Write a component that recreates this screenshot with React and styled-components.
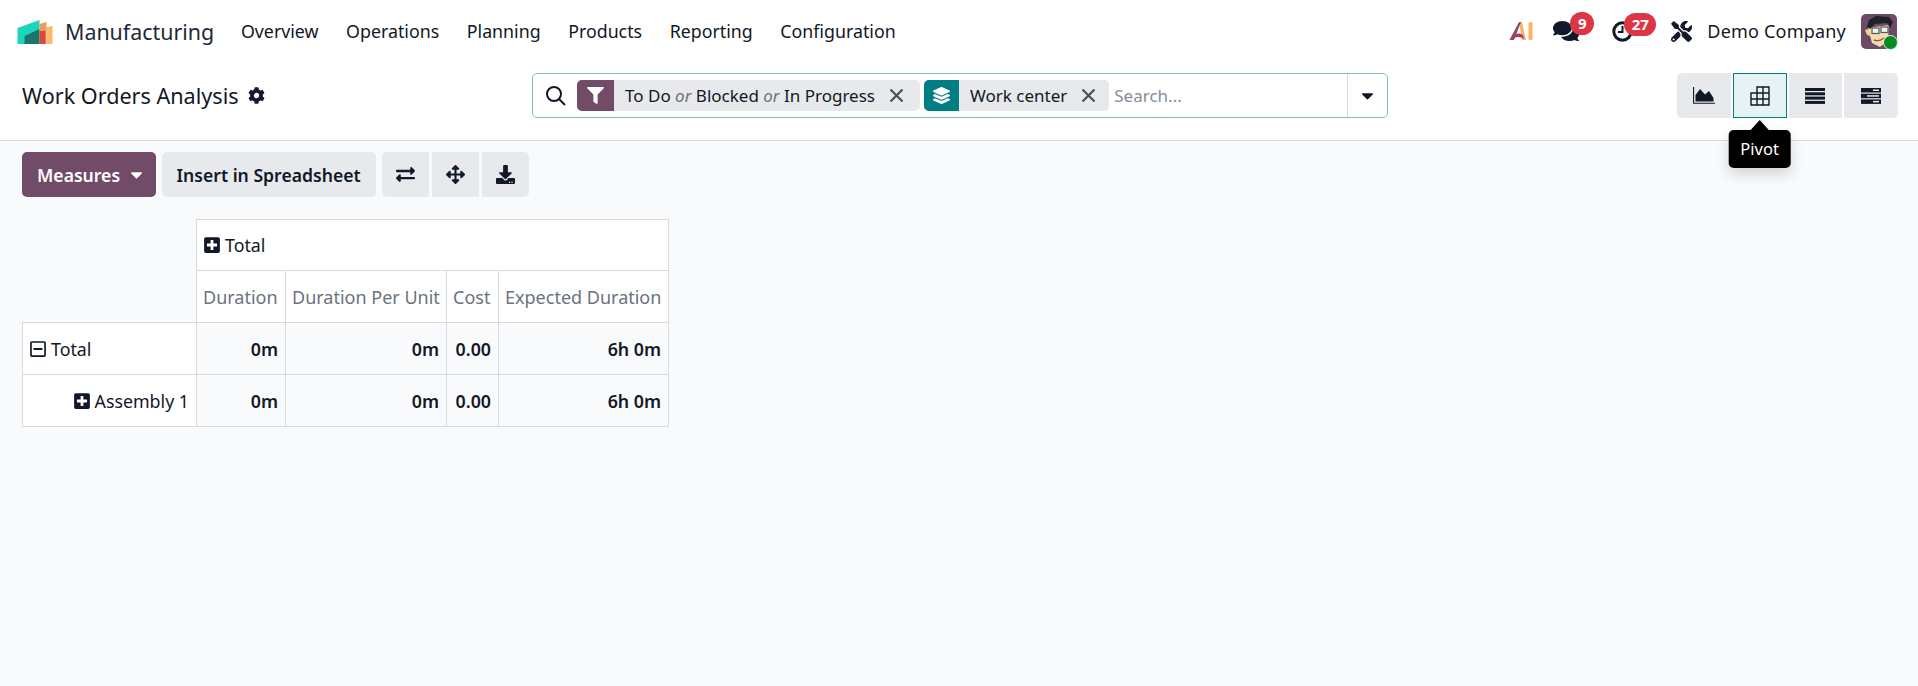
import React from 'react';
import styled, { createGlobalStyle } from 'styled-components';
import {
  FaArrowsAlt,
  FaCaretDown,
  FaCog,
  FaComments,
  FaDownload,
  FaExchangeAlt,
  FaFilter,
  FaLayerGroup,
  FaPlusSquare,
  FaRegMinusSquare,
  FaTools,
} from 'react-icons/fa';

const GlobalStyle = createGlobalStyle`
  html, body {
    margin: 0;
    padding: 0;
    height: 100%;
    background: #f9fafb;
    font-family: "Noto Sans", "Liberation Sans", sans-serif;
    font-size: 18px;
    color: #111827;
  }
  #root { height: 100%; }
`;

const Page = styled.div`
  display: flex;
  flex-direction: column;
  height: 686px;
  overflow: hidden;
`;

const Navbar = styled.div`
  display: flex;
  align-items: center;
  height: 62px;
  padding: 0 21px 0 17px;
  background: #fff;
`;

const Brand = styled.div`
  display: flex;
  align-items: center;
  gap: 12px;
  font-size: 21.4px;
  color: #1f2937;
  margin-right: 13px;
`;

const NavLink = styled.div`
  padding: 0 13.8px;
  font-size: 17.8px;
  color: #111827;
`;

const NavRight = styled.div`
  display: flex;
  align-items: center;
  margin-left: auto;
`;

const IconSlot = styled.div`
  position: relative;
  display: flex;
  align-items: center;
  font-size: ${p => p.$size || 20}px;
  color: #111827;
  margin-right: ${p => p.$gap || 0}px;
`;

const Badge = styled.span`
  position: absolute;
  top: ${p => p.$top}px;
  left: ${p => p.$left}px;
  min-width: ${p => p.$width}px;
  height: 23px;
  border-radius: 12px;
  background: #dc3545;
  color: #fff;
  font-size: 15px;
  font-weight: 700;
  line-height: 23px;
  text-align: center;
`;

const CompanyName = styled.div`
  font-size: 18px;
  letter-spacing: 0.2px;
  margin-right: 15px;
`;

const Avatar = styled.div`
  position: relative;
  width: 36px;
  height: 35px;
`;

const OnlineDot = styled.span`
  position: absolute;
  right: -1px;
  bottom: -1px;
  width: 13px;
  height: 13px;
  border-radius: 50%;
  background: #078a1e;
  border: 1px solid #eaf2f4;
`;

const ControlPanel = styled.div`
  display: flex;
  align-items: center;
  height: 79px;
  box-sizing: border-box;
  padding: 11px 20px 22px 22px;
  background: #fff;
  border-bottom: 1px solid #d8dadd;
`;

const TitleBlock = styled.div`
  display: flex;
  align-items: center;
  gap: 9px;
  width: 510px;
  font-size: 21.6px;
  color: #111827;
  svg { font-size: 17px; }
`;

const SearchBox = styled.div`
  display: flex;
  align-items: center;
  width: 856px;
  height: 45px;
  box-sizing: border-box;
  padding-left: 12px;
  background: #fff;
  border: 1px solid #7fbdc0;
  border-radius: 5px;
`;

const SearchIcon = styled.svg`
  width: 21px;
  height: 21px;
  margin-right: 11px;
  flex-shrink: 0;
`;

const Chip = styled.div`
  display: flex;
  align-items: center;
  height: 31px;
  margin-right: ${p => p.$gap}px;
  background: #e7e9ed;
  border-radius: 5px;
  overflow: hidden;
`;

const ChipIcon = styled.span`
  display: flex;
  align-items: center;
  justify-content: center;
  width: ${p => p.$width}px;
  height: 100%;
  background: ${p => p.$color};
  color: #fff;
  font-size: 17px;
`;

const ChipText = styled.span`
  padding: 0 14px 0 11px;
  font-size: 17px;
  white-space: nowrap;
  em { color: #6b7280; }
`;

const ChipClose = styled.svg`
  width: 15px;
  height: 13px;
  margin-right: ${p => p.$gap}px;
  flex-shrink: 0;
`;

const SearchPlaceholder = styled.div`
  flex: 1;
  font-size: 17px;
  color: #858d97;
`;

const SearchDropdown = styled.div`
  display: flex;
  align-items: center;
  justify-content: center;
  width: 39px;
  height: 100%;
  border-left: 1px solid #d8dadd;
  font-size: 19px;
`;

const ViewSwitcher = styled.div`
  display: flex;
  gap: 2px;
  margin-left: auto;
`;

const ViewButton = styled.div`
  position: relative;
  display: flex;
  align-items: center;
  justify-content: center;
  width: 53.75px;
  height: 45px;
  box-sizing: border-box;
  background: ${p => (p.$active ? '#e6f2f3' : '#e7e9ed')};
  border: ${p => (p.$active ? '1px solid #017e84' : 'none')};
  border-radius: ${p => (p.$first ? '5px 0 0 5px' : p.$last ? '0 5px 5px 0' : '0')};
`;

const Tooltip = styled.div`
  position: absolute;
  top: 56px;
  left: 50%;
  transform: translateX(-50%);
  padding: 0 12px;
  height: 38px;
  line-height: 37px;
  font-size: 16.5px;
  color: #fff;
  background: #000;
  border-radius: 5px;
  box-shadow: 0 6px 14px rgba(0, 0, 0, 0.16);
  z-index: 5;
  &::before {
    content: '';
    position: absolute;
    top: -10px;
    left: 50%;
    margin-left: -10px;
    border-left: 10px solid transparent;
    border-right: 10px solid transparent;
    border-bottom: 11px solid #000;
  }
`;

const Content = styled.div`
  display: flex;
  flex-direction: column;
  gap: 22px;
  padding: 11px 22px;
`;

const Toolbar = styled.div`
  display: flex;
  align-items: center;
  gap: 6px;
`;

const Button = styled.div`
  display: flex;
  align-items: center;
  gap: 7px;
  height: 45px;
  padding: ${p => (p.$primary ? '0 9.5px 0 15px' : '0 15px')};
  border-radius: 5px;
  font-size: 17.6px;
  font-weight: 600;
  background: ${p => (p.$primary ? '#714b67' : '#e7e9ed')};
  color: ${p => (p.$primary ? '#fff' : '#111827')};
`;

const ButtonGroup = styled.div`
  display: flex;
  gap: 2.5px;
`;

const IconButton = styled.div`
  display: flex;
  align-items: center;
  justify-content: center;
  width: 47.5px;
  height: 45px;
  font-size: 19px;
  background: #e7e9ed;
  border-radius: ${p => (p.$first ? '5px 0 0 5px' : p.$last ? '0 5px 5px 0' : '0')};
`;

const PivotTable = styled.table`
  border-collapse: collapse;
  font-size: 17.8px;
  table-layout: fixed;
  width: 647px;
  th, td {
    border: 1px solid #d8dadd;
    padding: 0 7px 0 6px;
    height: 52px;
    box-sizing: border-box;
    white-space: nowrap;
  }
`;

const EmptyCorner = styled.th`
  && { height: 51px; border: none; background: transparent; }
`;

const HeaderCell = styled.th`
  && { height: 51px; }
  background: #fff;
  font-weight: 400;
  text-align: left;
`;

const MeasureCell = styled.th`
  background: #fff;
  font-size: 18px;
  font-weight: 400;
  color: #6b7280;
  text-align: left;
`;

const RowHeader = styled.td`
  background: #fff;
  text-align: ${p => (p.$nested ? 'right' : 'left')};
`;

const ValueCell = styled.td`
  text-align: right;
  font-weight: 600;
`;

const CellIcon = styled.span`
  display: inline-flex;
  vertical-align: -2px;
  margin-right: 4px;
  font-size: 18px;
`;

const rows = [
  { label: 'Total', open: true },
  { label: 'Assembly 1', nested: true },
];

const Logo = () => (
  <svg width="36" height="25" viewBox="0 0 36 25">
    <polygon points="0.5,9 22.5,1 22.5,25 0.5,25" fill="#1bd6bc" />
    <polygon points="7.5,17 22.5,10 22.5,25 7.5,25" fill="#1c7569" />
    <polygon points="22.5,5 29.5,3 29.5,25 22.5,25" fill="#e89a66" />
    <polygon points="29.5,8 35.5,7 35.5,25 29.5,25" fill="#fbb868" />
    <rect x="22.5" y="12" width="6" height="13" fill="#d8483f" />
  </svg>
);

const AiMark = () => (
  <svg width="24" height="20" viewBox="0 0 24 20">
    <path d="M10 1 H13 L17 19 H13 Z" fill="#f9b468" />
    <path d="M10 1 H12 L5 19 H0.5 Z" fill="#8a4a6e" />
    <path d="M4 14.5 Q9 11 14 14 L15 18 Q9 14 3 18 Z" fill="#a8405c" />
    <rect x="19.5" y="1" width="4" height="18" rx="1.5" fill="#f9b468" />
  </svg>
);

const ClockIcon = () => (
  <svg width="21" height="21" viewBox="0 0 21 21" fill="none" stroke="#111827">
    <circle cx="10.5" cy="10.5" r="8.7" strokeWidth="3" />
    <path d="M10.5 5v6H6" strokeWidth="2" />
  </svg>
);

const AvatarArt = () => (
  <svg width="36" height="35" viewBox="0 0 36 35">
    <rect width="36" height="35" rx="5" fill="#6d4a66" />
    <path d="M7 14 L28 11 L27 26 L19 33 L11 29 Z" fill="#f5dcae" />
    <path d="M4 16 L8 15 L9 22 L6 21 Z" fill="#f0cf9c" />
    <path d="M6 13 L8 6 L15 2 L28 3 L32 8 L29 14 L26 9 L14 10 L9 15 Z" fill="#1f2228" />
    <rect x="11" y="14" width="7" height="5.5" fill="#eef1ee" stroke="#55585e" strokeWidth="1.2" />
    <rect x="20" y="13" width="7" height="5.5" fill="#eef1ee" stroke="#55585e" strokeWidth="1.2" />
    <path d="M13 26 Q18 28 23 24" stroke="#8a5a40" strokeWidth="1.4" fill="none" />
  </svg>
);

const AreaIcon = () => (
  <svg width="22" height="17" viewBox="0 0 22 17">
    <path d="M.6 0v16.2H22" fill="none" stroke="#111827" strokeWidth="1.1" />
    <path d="M2.5 14.5V8L7 2l5 5.5L16 4l4.5 7v3.5Z" fill="#111827" />
  </svg>
);

const PivotIcon = () => (
  <svg width="20" height="20" viewBox="0 0 20 20" fill="none" stroke="#111827" strokeWidth="1.4">
    <path d="M7 7V1h12v18H1V7h18M1 13h18M7 7v12M13 1v18" />
  </svg>
);

const ListIcon = () => (
  <svg width="20" height="16" viewBox="0 0 20 16" fill="#111827">
    <rect width="20" height="3" />
    <rect y="4.3" width="20" height="3" />
    <rect y="8.6" width="20" height="3" />
    <rect y="12.9" width="20" height="3" />
  </svg>
);

const GanttIcon = () => (
  <svg width="20" height="16" viewBox="0 0 20 16">
    <rect width="20" height="4.5" fill="#111827" />
    <rect y="5.7" width="20" height="4.5" fill="#111827" />
    <rect y="11.4" width="20" height="4.5" fill="#111827" />
    <rect x="12" y="1.5" width="6" height="1.5" fill="#e7e9ed" />
    <rect x="6" y="7.2" width="12" height="1.5" fill="#e7e9ed" />
    <rect x="12" y="12.9" width="6" height="1.5" fill="#e7e9ed" />
  </svg>
);

const CloseMark = ({ gap }) => (
  <ChipClose $gap={gap} viewBox="0 0 15 13" fill="none" stroke="#4b5563" strokeWidth="2.3">
    <path d="M1.5 .5l12 12M13.5 .5l-12 12" />
  </ChipClose>
);

export default function App() {
  return (
    <Page>
      <GlobalStyle />
      <Navbar>
        <Brand>
          <Logo />
          Manufacturing
        </Brand>
        {['Overview', 'Operations', 'Planning', 'Products', 'Reporting', 'Configuration'].map(item => (
          <NavLink key={item}>{item}</NavLink>
        ))}
        <NavRight>
          <IconSlot $gap={20}><AiMark /></IconSlot>
          <IconSlot $size={26} $gap={33}>
            <FaComments />
            <Badge $left={17} $top={-6} $width={24}>9</Badge>
          </IconSlot>
          <IconSlot $gap={38}>
            <ClockIcon />
            <Badge $left={12} $top={-8} $width={32}>27</Badge>
          </IconSlot>
          <IconSlot $size={21} $gap={15}><FaTools /></IconSlot>
          <CompanyName>Demo Company</CompanyName>
          <Avatar>
            <AvatarArt />
            <OnlineDot />
          </Avatar>
        </NavRight>
      </Navbar>

      <ControlPanel>
        <TitleBlock>
          Work Orders Analysis
          <FaCog />
        </TitleBlock>
        <SearchBox>
          <SearchIcon viewBox="0 0 21 21" fill="none" stroke="#111827" strokeWidth="2">
            <circle cx="9" cy="9" r="7" />
            <path d="M14 14l6 6" />
          </SearchIcon>
          <Chip $gap={4}>
            <ChipIcon $width={37} $color="#714b67"><FaFilter /></ChipIcon>
            <ChipText>To Do <em>or</em> Blocked <em>or</em> In Progress</ChipText>
            <CloseMark gap={16} />
          </Chip>
          <Chip $gap={5}>
            <ChipIcon $width={35} $color="#017e84"><FaLayerGroup /></ChipIcon>
            <ChipText>Work center</ChipText>
            <CloseMark gap={13} />
          </Chip>
          <SearchPlaceholder>Search...</SearchPlaceholder>
          <SearchDropdown><FaCaretDown /></SearchDropdown>
        </SearchBox>
        <ViewSwitcher>
          <ViewButton $first><AreaIcon /></ViewButton>
          <ViewButton $active>
            <PivotIcon />
            <Tooltip>Pivot</Tooltip>
          </ViewButton>
          <ViewButton><ListIcon /></ViewButton>
          <ViewButton $last><GanttIcon /></ViewButton>
        </ViewSwitcher>
      </ControlPanel>

      <Content>
        <Toolbar>
          <Button $primary>
            Measures
            <FaCaretDown size={19} />
          </Button>
          <Button>Insert in Spreadsheet</Button>
          <ButtonGroup>
            <IconButton $first><FaExchangeAlt /></IconButton>
            <IconButton><FaArrowsAlt /></IconButton>
            <IconButton $last><FaDownload /></IconButton>
          </ButtonGroup>
        </Toolbar>

        <PivotTable>
          <colgroup>
            <col style={{ width: 174 }} />
            <col style={{ width: 89 }} />
            <col style={{ width: 161 }} />
            <col style={{ width: 52 }} />
            <col style={{ width: 170 }} />
          </colgroup>
          <thead>
            <tr>
              <EmptyCorner />
              <HeaderCell colSpan={4}>
                <CellIcon><FaPlusSquare /></CellIcon>Total
              </HeaderCell>
            </tr>
            <tr>
              <EmptyCorner />
              <MeasureCell>Duration</MeasureCell>
              <MeasureCell>Duration Per Unit</MeasureCell>
              <MeasureCell>Cost</MeasureCell>
              <MeasureCell>Expected Duration</MeasureCell>
            </tr>
          </thead>
          <tbody>
            {rows.map(row => (
              <tr key={row.label}>
                <RowHeader $nested={row.nested}>
                  <CellIcon>{row.open ? <FaRegMinusSquare /> : <FaPlusSquare />}</CellIcon>
                  {row.label}
                </RowHeader>
                <ValueCell>0m</ValueCell>
                <ValueCell>0m</ValueCell>
                <ValueCell>0.00</ValueCell>
                <ValueCell>6h 0m</ValueCell>
              </tr>
            ))}
          </tbody>
        </PivotTable>
      </Content>
    </Page>
  );
}
